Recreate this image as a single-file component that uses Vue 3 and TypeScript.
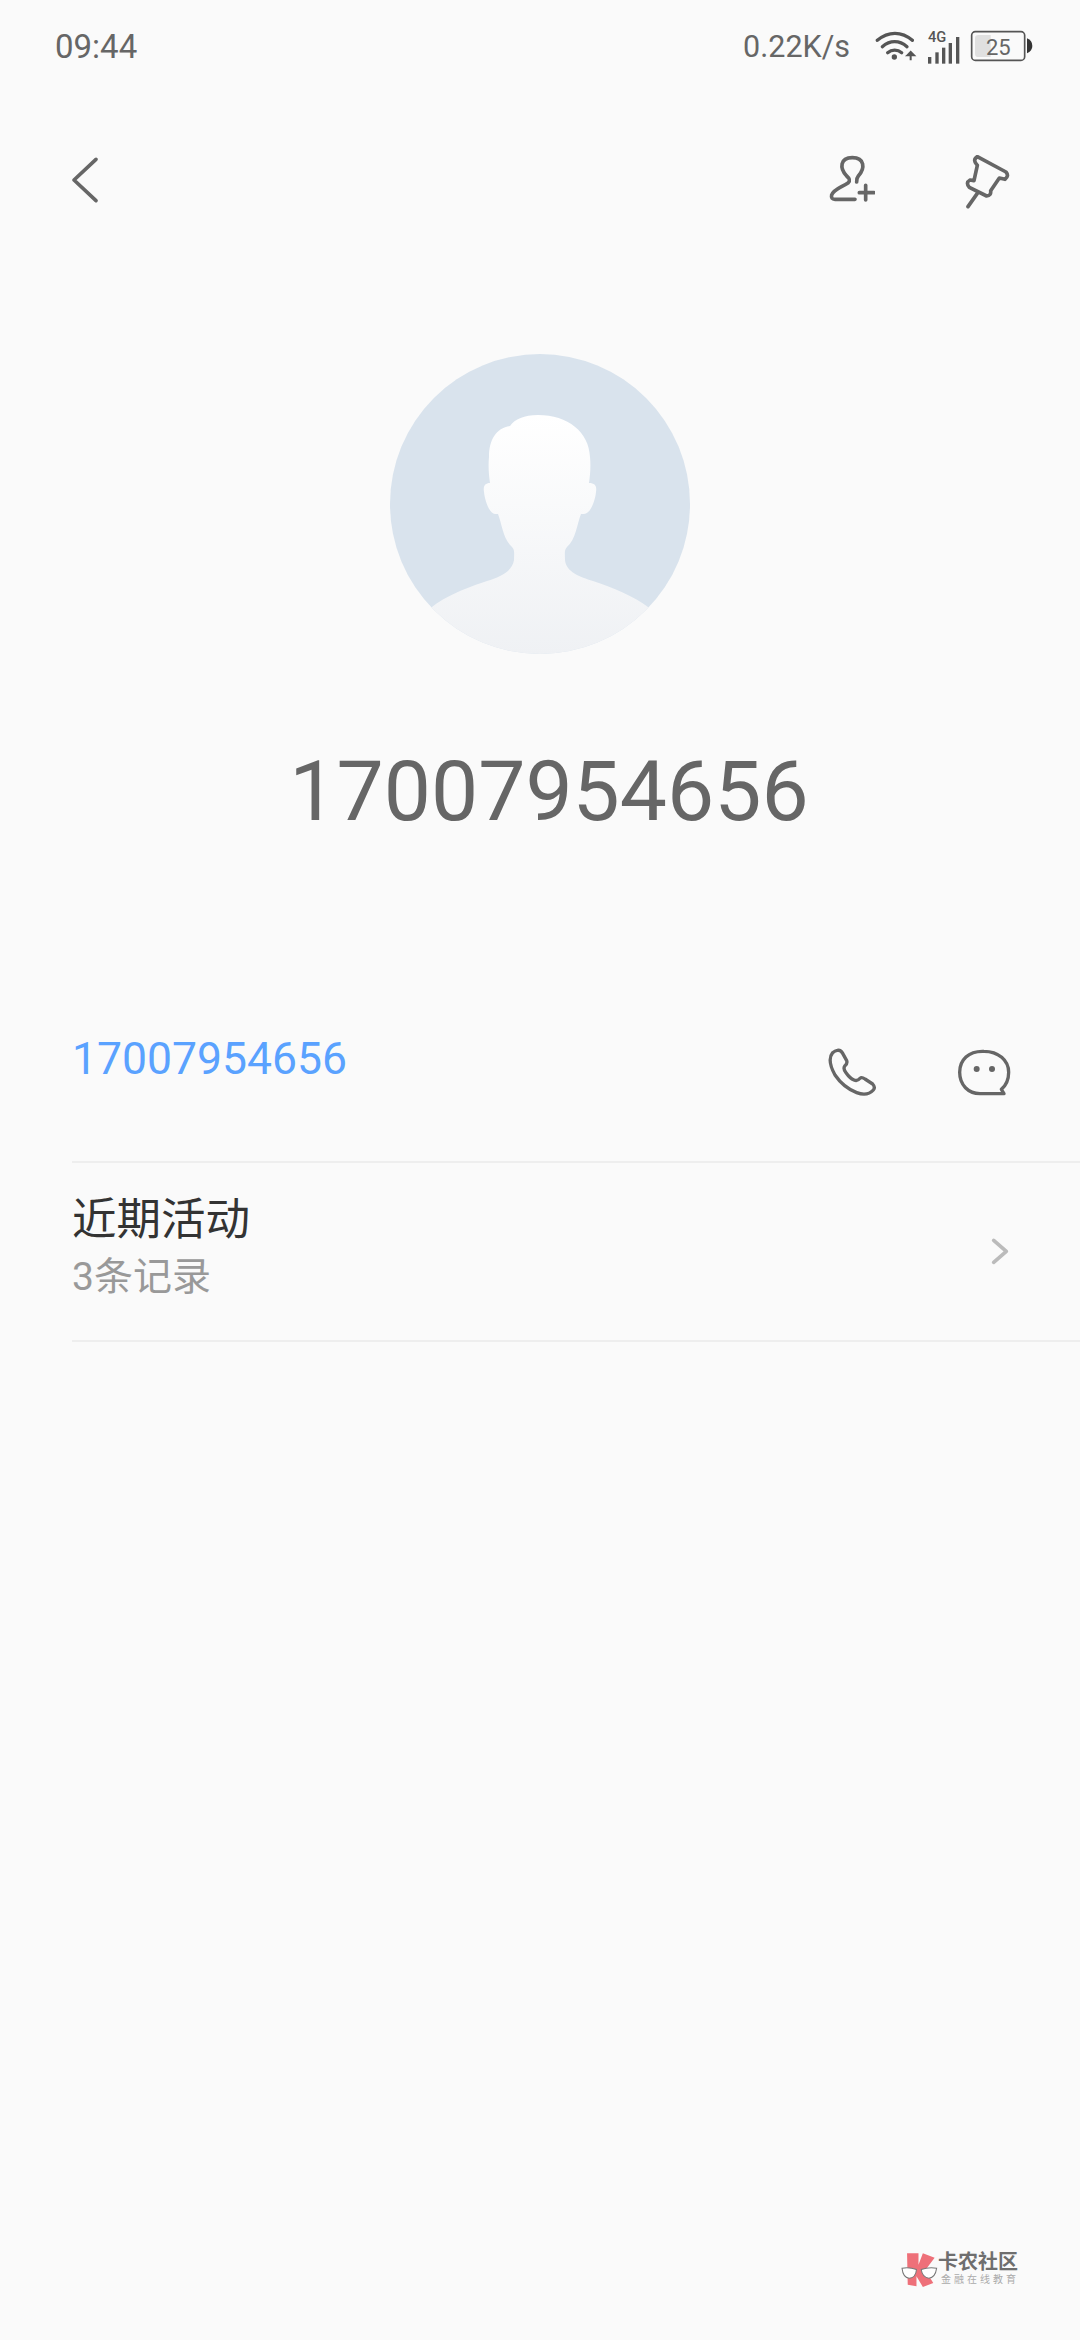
<template>
  <div class="screen">
    <div class="status-bar">
      <span class="time">09:44</span>
      <div class="status-right">
        <span class="speed">0.22K/s</span>
        <svg class="wifi" viewBox="465 90 126 90" width="42" height="30">
          <path d="M472 118 C505 90 545 90 577 118" class="wifi-arc" />
          <path d="M487 137 C510 117 538 117 561 137" class="wifi-arc" />
          <path d="M503 155 C515 145 533 145 545 155" class="wifi-arc" />
          <circle cx="523" cy="168" r="8" fill="#555" />
          <path d="M572 178 V160 M562 163 L572 153 L582 163 Z" stroke="#555" stroke-width="6" fill="#555" />
        </svg>
        <svg class="signal" viewBox="621 78 99 105" width="33" height="35">
          <text x="624" y="116" class="net-type">4G</text>
          <rect x="624" y="162" width="10" height="20" fill="#555" />
          <rect x="646" y="148" width="10" height="34" fill="#555" />
          <rect x="666" y="134" width="10" height="48" fill="#555" />
          <rect x="686" y="120" width="10" height="62" fill="#555" />
          <rect x="708" y="102" width="10" height="80" fill="#555" />
        </svg>
        <svg class="battery" viewBox="750 87 189 96" width="63" height="32">
          <rect x="755" y="92" width="159" height="86" rx="11" fill="none" stroke="#555" stroke-width="5" />
          <path d="M765 112 Q765 102 775 102 H812 V168 H775 Q765 168 765 158 Z" fill="#e0e0e0" />
          <path d="M921 112 Q937 118 937 135 Q937 150 921 157 Z" fill="#333" />
          <text x="835" y="161" class="battery-level">25</text>
        </svg>
      </div>
    </div>

    <div class="toolbar">
      <svg viewBox="210 465 90 150" width="30" height="50">
        <path d="M288 478 L222 540 L288 602" class="line" />
      </svg>
      <div class="toolbar-actions">
        <svg viewBox="327 465 138 141" width="46" height="47">
          <path
            d="M405 598 H345 Q332 598 335 585 C340 568 365 562 385 548 C392 540 388 535 380 528 C358 505 360 473 397 473 C434 473 436 505 415 528 Q409 535 410 546"
            class="line"
          />
          <path d="M437 556 V600 M418 578 H462" class="line" />
        </svg>
        <svg viewBox="732 465 138 162" width="46" height="54">
          <path
            d="M772 470 L858 516 Q868 528 855 538 L838 534 L812 572 Q814 587 800 588 L748 562 Q736 548 750 540 L762 542 L772 496 Q756 480 772 470 Z"
            class="line"
          />
          <path d="M772 580 L744 620" class="line" />
        </svg>
      </div>
    </div>

    <svg class="avatar" viewBox="0 0 300 300" width="300" height="300">
      <defs>
        <linearGradient id="bust" x1="0" y1="0" x2="0" y2="1">
          <stop offset="0" stop-color="#ffffff" />
          <stop offset="1" stop-color="#eff1f4" />
        </linearGradient>
        <clipPath id="disc"><circle cx="150" cy="150" r="150" /></clipPath>
      </defs>
      <circle cx="150" cy="150" r="150" fill="#d9e3ed" />
      <path
        clip-path="url(#disc)"
        fill="url(#bust)"
        d="M148 61 C134 61 125 65 120 72 C106 74 99 86 99 103 C98 113 99 122 100 129 C95 129 93 132 94 138 C95 148 100 160 105 160 L108 160 C112 170 113 185 122 193 C125 196 124 200 124 206 C122 218 110 223 97 227 C78 233 54 243 42 253 L42 300 L258 300 L258 253 C245 243 222 233 203 227 C190 223 176 218 175 206 C175 200 174 196 177 193 C186 185 187 170 191 160 L194 160 C200 160 205 148 206 138 C207 132 205 129 199 129 C200 122 201 113 200 103 C199 78 178 61 148 61 Z"
      />
    </svg>

    <div class="name">17007954656</div>

    <div class="phone-row">
      <span class="phone-number">17007954656</span>
      <div class="phone-actions">
        <svg viewBox="141 141 150 150" width="50" height="50">
          <path
            d="M172 151 Q182 149 188 160 L200 182 Q203 190 195 197 Q188 205 198 218 Q210 235 222 240 Q232 245 240 235 Q245 230 255 237 L278 252 Q287 262 280 270 Q262 290 230 278 Q190 262 165 225 Q140 180 158 158 Q165 152 172 151 Z"
            class="line thin"
          />
        </svg>
        <svg viewBox="531 147 165 144" width="55" height="48">
          <path
            d="M612 154 C565 152 539 181 539 217 C539 255 565 281 600 281 H672 L664 268 C680 255 686 235 686 217 C686 181 655 154 612 154 Z"
            class="line thin"
          />
          <circle cx="590" cy="207" r="9" fill="#666" />
          <circle cx="636" cy="207" r="9" fill="#666" />
        </svg>
      </div>
    </div>

    <div class="activity-row">
      <div class="activity-text">
        <span class="activity-title">近期活动</span>
        <span class="activity-count">3条记录</span>
      </div>
      <svg viewBox="630 710 60 90" width="20" height="30">
        <path d="M641 720 L679 753 L641 786" class="line chevron" />
      </svg>
    </div>

    <div class="watermark">
      <svg viewBox="60 65 110 110" width="37" height="37">
        <path
          d="M78 72 H112 V106 L125 72 L160 85 L132 122 L156 160 L125 172 L106 140 V170 L80 165 Z"
          fill="#ee7079"
        />
        <path d="M63 116 Q85 112 106 120 Q104 145 84 146 Q66 144 63 116 Z" fill="#fff" stroke="#777" stroke-width="3" />
        <path d="M120 120 Q142 112 166 116 Q162 144 143 146 Q124 144 120 120 Z" fill="#fff" stroke="#777" stroke-width="3" />
      </svg>
      <div class="watermark-text">
        <span class="watermark-title">卡农社区</span>
        <span class="watermark-sub">金融在线教育</span>
      </div>
    </div>
  </div>
</template>

<script setup lang="ts">
</script>

<style>
html,
body {
  margin: 0;
  background: #fafafa;
}
</style>

<style scoped>
.screen {
  position: relative;
  width: 1080px;
  height: 2340px;
  overflow: hidden;
  background: #fafafa;
  font-family: Roboto, "Noto Sans CJK SC", sans-serif;
  color: #666;
}

svg {
  display: block;
  flex: none;
}

.status-bar {
  display: flex;
  align-items: center;
  justify-content: space-between;
  height: 92px;
  padding: 0 47px 0 55px;
  font-size: 33px;
  color: #666;
}

.status-right {
  display: flex;
  align-items: center;
  gap: 10px;
}

.speed {
  margin-right: 15px;
  font-size: 30.5px;
}

.wifi-arc {
  fill: none;
  stroke: #555;
  stroke-width: 10;
  stroke-linecap: round;
}

.net-type {
  font-size: 44px;
  font-weight: 500;
  fill: #555;
}

.battery-level {
  font-size: 66px;
  fill: #666;
  text-anchor: middle;
}

.toolbar {
  display: flex;
  justify-content: space-between;
  align-items: flex-start;
  padding: 63px 70px 0;
}

.toolbar-actions {
  display: flex;
  align-items: flex-start;
  gap: 89px;
}

.line {
  fill: none;
  stroke: #666;
  stroke-width: 11;
  stroke-linecap: round;
  stroke-linejoin: round;
}

.thin {
  stroke-width: 10;
}

.chevron {
  stroke: #bbb;
}

.avatar {
  margin: 145px auto 0;
}

.name {
  margin-top: 88px;
  padding-left: 18px;
  font-size: 84px;
  line-height: 100px;
  text-align: center;
  color: #666;
}

.phone-row {
  display: flex;
  justify-content: space-between;
  align-items: flex-start;
  margin-top: 191px;
  margin-left: 72px;
  padding: 0 68px 64px 0;
  border-bottom: 2px solid #eee;
}

.phone-number {
  font-size: 44.5px;
  line-height: 52px;
  color: #5aa2ff;
}

.phone-actions {
  display: flex;
  align-items: flex-end;
  gap: 80px;
  margin-top: 14px;
}

.activity-row {
  display: flex;
  align-items: center;
  justify-content: space-between;
  height: 177px;
  margin-left: 72px;
  padding-right: 70px;
  border-bottom: 2px solid #eee;
}

.activity-text {
  display: flex;
  flex-direction: column;
  padding-bottom: 6px;
}

.activity-title {
  font-size: 44.5px;
  line-height: 57px;
  color: #333;
}

.activity-count {
  font-size: 39px;
  line-height: 57px;
  color: #999;
}

.watermark {
  position: absolute;
  left: 901px;
  top: 2251px;
  display: flex;
  align-items: flex-start;
}

.watermark-text {
  display: flex;
  flex-direction: column;
}

.watermark-title {
  font-size: 20px;
  line-height: 22px;
  font-weight: 700;
  color: #6e6e6e;
}

.watermark-sub {
  margin-left: 3px;
  font-size: 10px;
  line-height: 14px;
  letter-spacing: 3px;
  color: #aaa;
}
</style>
